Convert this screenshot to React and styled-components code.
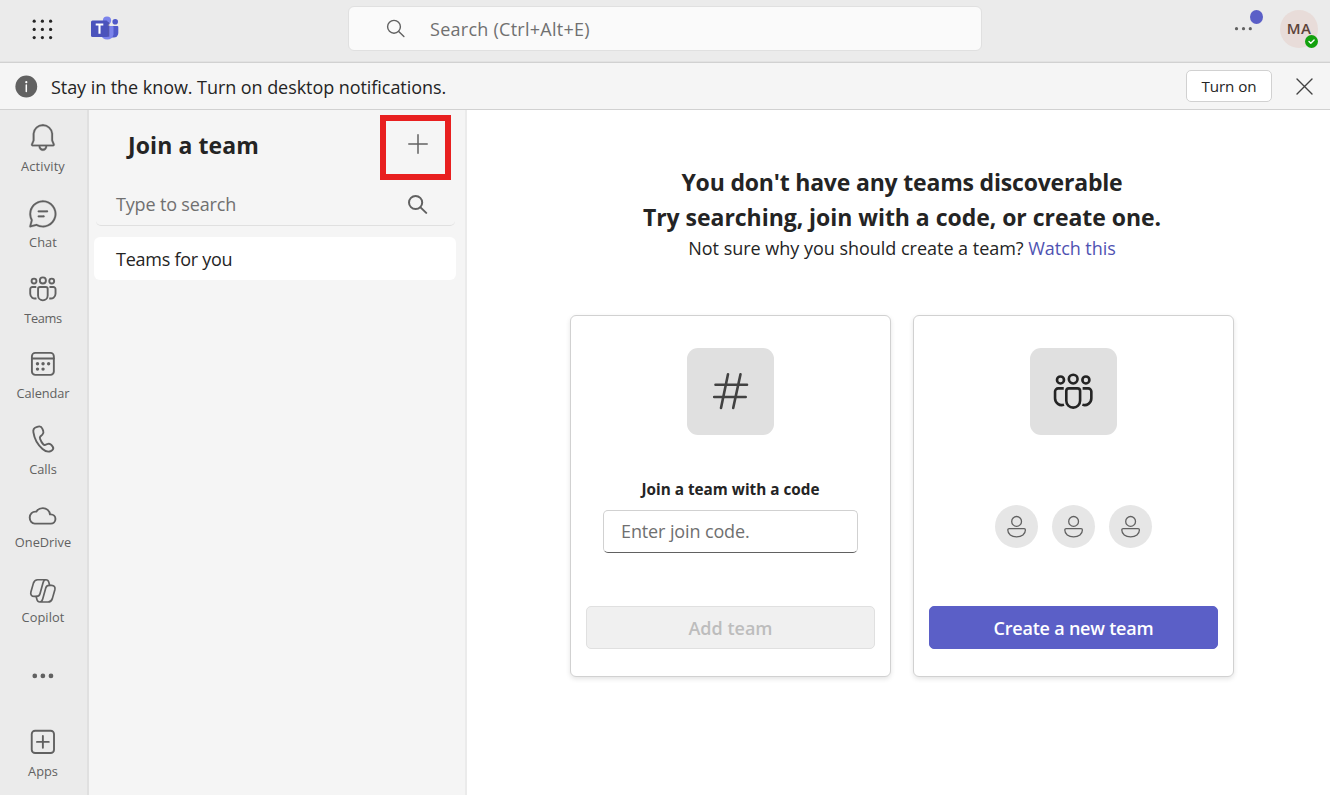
import React from "react";
import styled, { createGlobalStyle } from "styled-components";

const GlobalStyle = createGlobalStyle`
  * { box-sizing: border-box; }
  body { margin: 0; background: #fff; color: #242424; font-family: "Open Sans", "Noto Sans", sans-serif; }
  button, input { font-family: inherit; }
  svg { display: block; flex: none; }
`;

const Page = styled.div`
  width: 1330px;
  height: 795px;
  display: flex;
  flex-direction: column;
  overflow: hidden;
`;

const Label = styled.span`
  font-size: ${(p) => p.$size || 18}px;
  font-weight: ${(p) => p.$weight || 400};
  letter-spacing: ${(p) => p.$track || 0}px;
  line-height: ${(p) => p.$line || 26}px;
  color: ${(p) => p.$color || "#242424"};
  white-space: nowrap;
`;

const TopBar = styled.header`
  height: 63px;
  flex: none;
  display: flex;
  align-items: flex-start;
  background: #ebebeb;
  border-bottom: 1px solid #d1d1d1;
  box-shadow: inset 0 -1px 0 #e2e2e2;
`;

const Brand = styled.div`
  width: 348px;
  display: flex;
  align-items: center;
  gap: 37px;
  padding: 16px 0 0 30px;
`;

const SearchBox = styled.div`
  width: 634px;
  height: 45px;
  margin-top: 6px;
  padding-left: 36px;
  display: flex;
  align-items: center;
  gap: 23px;
  border: 1px solid #e0e0e0;
  border-radius: 6px;
  background: #fafafa;
`;

const Account = styled.div`
  flex: 1;
  display: flex;
  justify-content: flex-end;
  align-items: center;
  gap: 27px;
  padding: 10px 12px 0 0;
`;

const MoreButton = styled.div`
  position: relative;
  display: flex;
`;

const Dot = styled.span`
  position: absolute;
  right: -10px;
  top: -17px;
  width: 13px;
  height: 14px;
  border-radius: 50%;
  background: #5b5fc7;
`;

const Avatar = styled.div`
  position: relative;
  width: 38px;
  height: 38px;
  padding-bottom: 2px;
  border-radius: 50%;
  background: #e8dcd9;
  display: flex;
  align-items: center;
  justify-content: center;
`;

const Presence = styled.span`
  position: absolute;
  right: 0;
  bottom: 0;
`;

const Banner = styled.div`
  height: 47px;
  flex: none;
  display: flex;
  align-items: center;
  padding: 0 17px 0 15px;
  background: #f5f5f5;
  border-bottom: 1px solid #d1d1d1;
`;

const BannerText = styled.div`
  flex: 1;
  display: flex;
  padding: 2px 0 0 13px;
`;

const OutlineButton = styled.button`
  width: 86px;
  height: 32px;
  padding: 0;
  margin-right: 24px;
  border: 1px solid #d1d1d1;
  border-radius: 5px;
  background: #fff;
`;

const Body = styled.div`
  flex: 1;
  display: flex;
  min-height: 0;
`;

const Rail = styled.nav`
  width: 89px;
  flex: none;
  padding-right: 1px;
  display: flex;
  flex-direction: column;
  background: #ebebeb;
  border-right: 2px solid #e0e0e0;
`;

const RailItem = styled.div`
  height: ${(p) => p.$height}px;
  padding-top: ${(p) => p.$top}px;
  display: flex;
  flex-direction: column;
  align-items: center;
  gap: ${(p) => p.$gap || 0}px;
`;

const Panel = styled.aside`
  width: 378px;
  flex: none;
  padding: 5px 9px 0 5px;
  background: #f5f5f5;
  border-right: 2px solid #ebebeb;
`;

const PanelHead = styled.div`
  height: 65px;
  display: flex;
  align-items: center;
  justify-content: space-between;
  padding: 0 5px 5px 34px;
`;

const AddButton = styled.div`
  position: relative;
  width: 71px;
  height: 60px;
  display: flex;
  align-items: center;
  padding: 0 0 2px 28px;
`;

const Highlight = styled.div`
  position: absolute;
  left: 0;
  top: 0;
  width: 71px;
  height: 65px;
  border: 6px solid #e81f1f;
`;

const FilterField = styled.div`
  height: 46px;
  margin: 0 1px 11px 2px;
  padding: 2px 27px 0 20px;
  display: flex;
  align-items: center;
  justify-content: space-between;
  border-bottom: 1px solid #e0e0e0;
  border-radius: 5px;
`;

const PanelRow = styled.div`
  height: 43px;
  padding-left: 22px;
  display: flex;
  align-items: center;
  border-radius: 6px;
  background: #fff;
`;

const Main = styled.main`
  flex: 1;
  padding: 55px 0 0 7px;
  display: flex;
  flex-direction: column;
  align-items: center;
`;

const Cards = styled.div`
  display: flex;
  gap: 22px;
  margin-top: 54px;
`;

const Card = styled.section`
  width: 321px;
  height: 362px;
  padding: 32px 15px 27px;
  display: flex;
  flex-direction: column;
  align-items: center;
  border: 1px solid #d1d1d1;
  border-radius: 6px;
  background: #fff;
  box-shadow: 0 2px 5px rgba(0, 0, 0, 0.11);
`;

const Tile = styled.div`
  width: 87px;
  height: 87px;
  display: flex;
  align-items: center;
  justify-content: center;
  border-radius: 11px;
  background: #e0e0e0;
`;

const CodeLabel = styled.div`
  display: flex;
  margin-top: 41px;
`;

const CodeInput = styled.div`
  width: 255px;
  height: 43px;
  margin-top: 8px;
  padding: 0 0 2px 17px;
  display: flex;
  align-items: center;
  border: 1px solid #d1d1d1;
  border-bottom-color: #616161;
  border-radius: 5px;
`;

const ActionButton = styled.button`
  width: 289px;
  height: 43px;
  margin-top: auto;
  padding: 0;
  border: 1px solid ${(p) => (p.$primary ? "#5b5fc7" : "#e0e0e0")};
  border-radius: 5px;
  background: ${(p) => (p.$primary ? "#5b5fc7" : "#f0f0f0")};
`;

const People = styled.div`
  display: flex;
  gap: 14px;
  margin-top: 70px;
`;

const Person = styled.div`
  width: 43px;
  height: 43px;
  border-radius: 50%;
  background: #e6e6e6;
  display: flex;
  align-items: center;
  justify-content: center;
`;

const Icon = ({ size = 33.75, color = "#616161", width = 1.12, children }) => (
  <svg width={size} height={size} viewBox="0 0 20 20" fill="none" stroke={color} strokeWidth={width} strokeLinecap="round" strokeLinejoin="round">
    {children}
  </svg>
);

const TeamShape = () => (
  <>
    <circle cx="10" cy="5" r="1.8" />
    <circle cx="4.75" cy="5.35" r="1.45" />
    <circle cx="15.25" cy="5.35" r="1.45" />
    <path d="M8.25 8.85h3.5a1.1 1.1 0 0 1 1.1 1.1v4a2.85 2.85 0 0 1-5.7 0v-4a1.1 1.1 0 0 1 1.1-1.1Z" />
    <path strokeLinecap="butt" d="M6.1 8.85H3.8a1.3 1.3 0 0 0-1.3 1.3v2.8a2.75 2.75 0 0 0 3.7 2.6M13.9 8.85h2.3a1.3 1.3 0 0 1 1.3 1.3v2.8a2.75 2.75 0 0 1-3.7 2.6" />
  </>
);

const copilotHalf =
  "M11.8 3.4H6.9C5.7 3.4 4.8 4.2 4.4 5.4L2.9 10.7C2.5 12.3 3.4 13.3 4.8 13.3H6.3C7.4 13.3 8 12.7 8.3 11.7L10.1 5.2C10.4 4.1 11 3.4 11.8 3.4C12.8 3.4 13.3 4 13.5 4.8L14 6.7";

const icons = {
  bell: (
    <path fill="#616161" strokeWidth=".15" d="M10 2a5.92 5.92 0 0 1 5.98 5.36l.02.22V11.4l.92 2.22a1 1 0 0 1 .06.17l.01.08.01.13a1 1 0 0 1-.75.97l-.11.02L16 15h-3.5v.17a2.5 2.5 0 0 1-5 0V15H4a1 1 0 0 1-.26-.03l-.13-.04a1 1 0 0 1-.6-1.05l.02-.13.05-.13L4 11.4V7.57A5.9 5.9 0 0 1 10 2Zm1.5 13h-3v.15a1.5 1.5 0 0 0 1.36 1.34l.14.01c.78 0 1.42-.6 1.5-1.36V15ZM10 3a4.9 4.9 0 0 0-4.98 4.38L5 7.6V11.5l-.04.2L4 14h12l-.96-2.3-.04-.2V7.61A4.9 4.9 0 0 0 10 3Z" />
  ),
  chat: (
    <path fill="#616161" strokeWidth=".15" d="M10 2a8 8 0 1 1-3.61 15.14l-.12-.07-3.65.92a.5.5 0 0 1-.62-.45v-.08l.01-.08.92-3.64-.07-.12a7.95 7.95 0 0 1-.83-2.9l-.02-.37L2 10a8 8 0 0 1 8-8Zm0 1a7 7 0 0 0-6.1 10.42.5.5 0 0 1 .06.28l-.02.1-.75 3.01 3.02-.75a.5.5 0 0 1 .19-.01l.09.02.09.04A7 7 0 1 0 10 3Zm.5 8a.5.5 0 0 1 .09 1H7.5a.5.5 0 0 1-.09-1h3.09Zm2-3a.5.5 0 0 1 .09 1H7.5a.5.5 0 0 1-.09-1h5.09Z" />
  ),
  teams: <TeamShape />,
  calendar: (
    <>
      <rect x="3.5" y="3.5" width="13" height="13" rx="2" />
      <path d="M3.5 6.8h13" />
      <g fill="#616161" stroke="none">
        <circle cx="6.8" cy="9.9" r="1" />
        <circle cx="10.1" cy="9.9" r="1" />
        <circle cx="13.4" cy="9.9" r="1" />
        <circle cx="6.8" cy="13.1" r="1" />
        <circle cx="10.1" cy="13.1" r="1" />
      </g>
    </>
  ),
  calls: (
    <path d="M6.2 3L7.2 2.7C8.4 2.35 9.3 3 9.7 4L10.2 5.3C10.5 6.1 10.3 6.9 9.7 7.5L8.5 8.6C8.1 9 8.1 9.5 8.4 10.2C8.9 11.5 9.4 12.4 10.2 13.2C10.6 13.6 10.9 13.7 11.4 13.5L12.9 13C13.7 12.7 14.5 13 15 13.6L15.8 14.6C16.4 15.4 16.2 16.1 15.5 16.7L14.9 17.1C13.5 17.9 11.5 17.5 9.8 16C6.9 13.5 4.9 9.6 4.4 6.2C4.1 4.6 4.8 3.4 6.2 3Z" />
  ),
  cloud: (
    <path d="M5.2 14.6H14.7A2.75 2.75 0 0 0 14.7 9.1H14.2C14 7 12.2 5.4 10 5.4C8.3 5.4 6.9 6.2 6.1 7.5C3.8 7.2 2.2 8.9 2.2 11C2.2 13 3.5 14.6 5.2 14.6Z" />
  ),
  copilot: (
    <g strokeWidth="1">
      <path d={copilotHalf} />
      <path d={copilotHalf} transform="rotate(180 10 10)" />
    </g>
  ),
  more: (
    <g fill="#616161" stroke="none">
      <circle cx="5.2" cy="10" r="1.4" />
      <circle cx="10" cy="10" r="1.4" />
      <circle cx="14.8" cy="10" r="1.4" />
    </g>
  ),
  apps: (
    <>
      <rect x="3.4" y="3.4" width="13.2" height="13.2" rx="2" />
      <path d="M10 6.5v7M6.5 10h7" />
    </>
  ),
};

const railItems = [
  { icon: "bell", label: "Activity", height: 76, top: 10.5, gap: 2.5, track: 0.15 },
  { icon: "chat", label: "Chat", height: 76, top: 10.5, gap: 2.5, track: 0.1 },
  { icon: "teams", label: "Teams", height: 75, top: 9.5, gap: 3.5, track: -0.35 },
  { icon: "calendar", label: "Calendar", height: 76, top: 10, gap: 3, track: -0.1 },
  { icon: "calls", label: "Calls", height: 76, top: 9, gap: 4 },
  { icon: "cloud", label: "OneDrive", height: 75, top: 9.5, gap: 0.5 },
  { icon: "copilot", label: "Copilot", height: 76, top: 9.5, gap: 0.5, track: 0.1 },
  { icon: "more", height: 76, top: 19 },
  { icon: "apps", label: "Apps", height: 76, top: 9, gap: 3 },
];

const TeamsLogo = () => (
  <svg width="28" height="26" viewBox="0 0 28 26">
    <circle cx="24.2" cy="5.8" r="2.8" fill="#5059c9" />
    <path d="M18 10h8.3a1 1 0 0 1 1 1v6a4.5 4.5 0 0 1-4.5 4.5H20z" fill="#5059c9" />
    <circle cx="16" cy="4.6" r="4.1" fill="#7b83eb" />
    <path d="M10 10h11.5a1 1 0 0 1 1 1v7.5a6.4 6.4 0 0 1-12.5 0z" fill="#7b83eb" />
    <path d="M10 6h7a1.3 1.3 0 0 1 1.3 1.3v13.5H10z" fill="#3d3e8c" opacity=".65" />
    <rect x="0" y="4.5" width="16.8" height="16.5" rx="1.5" fill="#4b53bc" />
    <path d="M4.7 8.5h7.6M8.5 8.5v9.3" stroke="#fff" strokeWidth="2.1" fill="none" />
  </svg>
);

export default function App() {
  return (
    <Page>
      <GlobalStyle />
      <TopBar>
        <Brand>
          <svg width="24" height="24" viewBox="0 0 24 24" fill="#242424">
            {[4.2, 12.4, 20.6].map((y) => [4.2, 12.4, 20.6].map((x) => <circle key={`${x}-${y}`} cx={x} cy={y} r="1.6" />))}
          </svg>
          <TeamsLogo />
        </Brand>
        <SearchBox>
          <svg width="22" height="22" viewBox="0 0 22 22" fill="none" stroke="#616161" strokeWidth="1.4" strokeLinecap="round">
            <circle cx="9" cy="8.8" r="6.4" />
            <path d="M13.7 13.5l5.2 5.1" />
          </svg>
          <Label $color="#707070" $track={0.26}>Search (Ctrl+Alt+E)</Label>
        </SearchBox>
        <Account>
          <MoreButton>
            <svg width="20" height="4" viewBox="0 0 20 4" fill="#616161">
              <circle cx="3.5" cy="1.7" r="1.6" />
              <circle cx="10.5" cy="1.7" r="1.6" />
              <circle cx="17.3" cy="1.7" r="1.6" />
            </svg>
            <Dot />
          </MoreButton>
          <Avatar>
            <Label $size={15} $weight={600} $track={0.4} $color="#5c4339">MA</Label>
            <Presence>
              <svg width="13" height="13" viewBox="0 0 13 13">
                <circle cx="6.5" cy="6.5" r="6.5" fill="#13a10e" />
                <path d="M4 6.6l1.8 1.7 3.3-3.3" stroke="#fff" strokeWidth="1.4" fill="none" strokeLinecap="round" strokeLinejoin="round" />
              </svg>
            </Presence>
          </Avatar>
        </Account>
      </TopBar>
      <Banner>
        <svg width="23" height="23" viewBox="0 0 23 23">
          <circle cx="11.3" cy="11.5" r="10.9" fill="#616161" />
          <circle cx="11.3" cy="7.2" r="1.1" fill="#fff" />
          <path d="M11.3 10v6.5" stroke="#fff" strokeWidth="1.5" strokeLinecap="round" />
        </svg>
        <BannerText>
          <Label $track={-0.06}>Stay in the know. Turn on desktop notifications.</Label>
        </BannerText>
        <OutlineButton>
          <Label $size={15.2} $track={-0.05}>Turn on</Label>
        </OutlineButton>
        <svg width="17" height="17" viewBox="0 0 17 17" stroke="#424242" strokeWidth="1.4" strokeLinecap="round">
          <path d="M1 1l15 15M16 1L1 16" />
        </svg>
      </Banner>
      <Body>
        <Rail>
          {railItems.map((item) => (
            <RailItem key={item.icon} $height={item.height} $top={item.top} $gap={item.gap}>
              <Icon>{icons[item.icon]}</Icon>
              {item.label && <Label $size={12.8} $line={18} $track={item.track} $color="#616161">{item.label}</Label>}
            </RailItem>
          ))}
        </Rail>
        <Panel>
          <PanelHead>
            <Label $size={23} $weight={700} $line={32} $track={0.1}>Join a team</Label>
            <AddButton>
              <svg width="20" height="20" viewBox="0 0 20 20" stroke="#616161" strokeWidth="1.5" strokeLinecap="round">
                <path d="M10 .8v18.4M.8 10h18.4" />
              </svg>
              <Highlight />
            </AddButton>
          </PanelHead>
          <FilterField>
            <Label $color="#707070" $track={-0.16}>Type to search</Label>
            <svg width="20" height="20" viewBox="0 0 20 20" fill="none" stroke="#616161" strokeWidth="2" strokeLinecap="round">
              <circle cx="7.6" cy="8.5" r="6.6" />
              <path d="M12.5 13.4l5.7 5.5" />
            </svg>
          </FilterField>
          <PanelRow>
            <Label $track={-0.26}>Teams for you</Label>
          </PanelRow>
        </Panel>
        <Main>
          <Label $size={23} $weight={700} $line={35} $track={-0.19}>You don't have any teams discoverable</Label>
          <Label $size={23} $weight={700} $line={35} $track={-0.04}>Try searching, join with a code, or create one.</Label>
          <Label $line={26} $track={-0.02}>
            Not sure why you should create a team? <Label $color="#4f52b2" $track={-0.05}>Watch this</Label>
          </Label>
          <Cards>
            <Card>
              <Tile>
                <svg width="40" height="40" viewBox="0 0 40 40" stroke="#424242" strokeWidth="2.6" strokeLinecap="round">
                  <path d="M17 2.3L10 36M29.5 2.3L22.2 36M4.5 12.8h31.5M3.200 25h31.5" />
                </svg>
              </Tile>
              <CodeLabel>
                <Label $size={15.3} $weight={700} $line={26}>Join a team with a code</Label>
              </CodeLabel>
              <CodeInput>
                <Label $color="#707070" $track={-0.12}>Enter join code.</Label>
              </CodeInput>
              <ActionButton>
                <Label $weight={600} $color="#bdbdbd">Add team</Label>
              </ActionButton>
            </Card>
            <Card>
              <Tile>
                <Icon size={48.4} color="#242424" width={1.08}>
                  <TeamShape />
                </Icon>
              </Tile>
              <People>
                {[0, 1, 2].map((n) => (
                  <Person key={n}>
                    <svg width="22" height="24" viewBox="0 0 22 24" fill="none" stroke="#616161" strokeWidth="1.3">
                      <circle cx="10.6" cy="6.4" r="4.9" />
                      <path d="M3.1 13.7h15a1.3 1.3 0 0 1 1.3 1.3c0 4-3.6 6.9-8.8 6.9s-8.8-2.9-8.8-6.9a1.3 1.3 0 0 1 1.3-1.3Z" />
                    </svg>
                  </Person>
                ))}
              </People>
              <ActionButton $primary>
                <Label $weight={600} $track={-0.22} $color="#fff">Create a new team</Label>
              </ActionButton>
            </Card>
          </Cards>
        </Main>
      </Body>
    </Page>
  );
}
